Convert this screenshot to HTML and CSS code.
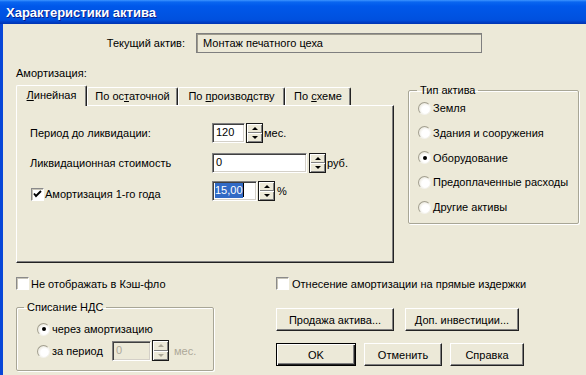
FILE: index.html
```html
<!DOCTYPE html>
<html lang="ru">
<head>
  <meta charset="UTF-8" />
  <title>Характеристики актива</title>
<link rel="stylesheet" href="styles.css">
</head>
<body>
  <div class="window">
    <div class="titlebar">Характеристики актива</div>
    <div class="client">
      <div class="current">
        <span class="current-label">Текущий актив:</span>
        <div class="static-field">Монтаж печатного цеха</div>
      </div>

      <div class="section-label">Амортизация:</div>

      <div class="main">
        <div class="tabs">
          <div class="tabstrip">
            <div class="tab tab-active tab-1"><u>Л</u>инейная</div>
            <div class="tab tab-2">По ос<u>т</u>аточной</div>
            <div class="tab tab-3">По <u>п</u>роизводству</div>
            <div class="tab tab-4">По <u>с</u>хеме</div>
          </div>
          <div class="tab-pane">
            <div class="field-row row-period">
              <span class="field-label">Период до ликвидации:</span>
              <div class="edit edit-period">120</div>
              <div class="spin"><span class="spin-half"><i class="arrow-up"></i></span><span class="spin-half"><i class="arrow-down"></i></span></div>
              <span class="unit">мес.</span>
            </div>
            <div class="field-row row-value">
              <span class="field-label">Ликвидационная стоимость</span>
              <div class="edit edit-value">0</div>
              <div class="spin"><span class="spin-half"><i class="arrow-up"></i></span><span class="spin-half"><i class="arrow-down"></i></span></div>
              <span class="unit">руб.</span>
            </div>
            <div class="field-row row-first">
              <span class="field-label check-label">
                <span class="checkbox"><svg width="11" height="11" viewBox="0 0 11 11"><path d="M2 4.5 L4 7 L9 2" fill="none" stroke="#000" stroke-width="1.9"/></svg></span>
                Амортизация 1-го года
              </span>
              <div class="edit edit-first"><span class="selection">15,00</span><span class="caret"></span></div>
              <div class="spin"><span class="spin-half"><i class="arrow-up"></i></span><span class="spin-half"><i class="arrow-down"></i></span></div>
              <span class="unit">%</span>
            </div>
          </div>
        </div>

        <fieldset class="group type-group">
          <legend>Тип актива</legend>
          <div class="radio-row"><span class="radio"></span>Земля</div>
          <div class="radio-row"><span class="radio"></span>Здания и сооружения</div>
          <div class="radio-row"><span class="radio radio-on"></span>Оборудование</div>
          <div class="radio-row"><span class="radio"></span>Предоплаченные расходы</div>
          <div class="radio-row"><span class="radio"></span>Другие активы</div>
        </fieldset>
      </div>

      <div class="checks">
        <label class="check-item check-cash"><span class="checkbox"></span>Не отображать в Кэш-фло</label>
        <label class="check-item"><span class="checkbox"></span>Отнесение амортизации на прямые издержки</label>
      </div>

      <div class="bottom">
        <fieldset class="group vat-group">
          <legend>Списание НДС</legend>
          <div class="radio-row"><span class="radio radio-on"></span>через амортизацию</div>
          <div class="radio-row">
            <span class="radio-label"><span class="radio"></span>за период</span>
            <div class="edit edit-disabled">0</div>
            <div class="spin spin-disabled"><span class="spin-half"><i class="arrow-up"></i></span><span class="spin-half"><i class="arrow-down"></i></span></div>
            <span class="unit unit-disabled">мес.</span>
          </div>
        </fieldset>

        <div class="buttons">
          <div class="btn-row">
            <button class="btn btn-sale">Продажа актива...</button>
            <button class="btn btn-invest">Доп. инвестиции...</button>
          </div>
          <div class="btn-row btn-row-main">
            <button class="btn btn-default btn-ok">OK</button>
            <button class="btn btn-cancel">Отменить</button>
            <button class="btn btn-help">Справка</button>
          </div>
        </div>
      </div>
    </div>
  </div>
</body>
</html>
```

FILE: styles.css
```css
body {
  margin: 0;
  font-family: "Liberation Sans", Arial, sans-serif;
  font-size: 11px;
  color: #000;
  background: #ece9d8;
}

.window {
  width: 586px;
  height: 375px;
  overflow: hidden;
  background: #ece9d8;
}

.titlebar {
  height: 24px;
  box-sizing: border-box;
  padding: 1px 0 0 6px;
  line-height: 23px;
  font-size: 13px;
  font-weight: bold;
  color: #fff;
  text-shadow: 1px 1px #0a1e8a;
  background: linear-gradient(to bottom, #3d95ff 0, #0a66f0 2px, #0058ea 6px, #0054e3 14px, #0050de 20px, #003fc8 22px, #0033b0 24px);
}

.client {
  height: 351px;
  box-sizing: border-box;
  border-left: 3px solid #0847d8;
  padding-left: 13px;
}

/* current asset */
.current {
  display: flex;
  align-items: center;
  height: 20px;
  padding-top: 9px;
}

.current-label {
  width: 180px;
  box-sizing: border-box;
  padding-right: 11px;
  text-align: right;
}

.static-field {
  width: 286px;
  height: 20px;
  box-sizing: border-box;
  border: 1px solid #7f7f7f;
  box-shadow: inset 1px 1px #9d9a8c;
  padding-left: 6px;
  line-height: 18px;
}

.section-label {
  margin-top: 13px;
  line-height: 14px;
}

.main {
  display: flex;
  align-items: flex-start;
  margin-top: 5px;
}

/* tabs */
.tabs {
  width: 378px;
}

.tabstrip {
  display: flex;
  align-items: flex-end;
  height: 20px;
}

.tab {
  height: 18px;
  box-sizing: border-box;
  border-top: 1px solid #fff;
  border-left: 1px solid #fff;
  border-right: 1px solid #222;
  box-shadow: inset -1px 0 #808080;
  border-radius: 2px 2px 0 0;
  background: #ece9d8;
  text-align: center;
  line-height: 17px;
}

.tab-active {
  position: relative;
  z-index: 1;
  height: 21px;
  margin-bottom: -1px;
  line-height: 19px;
}

.tab-1 { width: 71px; }
.tab-2 { width: 91px; }
.tab-3 { width: 107px; }
.tab-4 { width: 66px; }

.tab-pane {
  height: 158px;
  box-sizing: border-box;
  border-top: 1px solid #fff;
  border-left: 1px solid #fff;
  border-right: 1px solid #222;
  border-bottom: 1px solid #222;
  box-shadow: inset -1px -1px #808080;
  padding: 17px 0 0 13px;
}

.field-row {
  display: flex;
  align-items: center;
  height: 20px;
}

.row-value { margin-top: 10px; }
.row-first { margin-top: 8px; }

.field-label {
  width: 182px;
}

.check-label {
  display: flex;
  align-items: center;
  margin-top: 6px;
}

.check-label .checkbox {
  margin-left: 1px;
  margin-right: 1px;
}

/* edit boxes */
.edit {
  height: 20px;
  box-sizing: border-box;
  border: 1px solid;
  border-color: #808080 #fff #fff #808080;
  box-shadow: inset 1px 1px #404040, inset -1px -1px #d4d0c8;
  background: #fff;
  padding-left: 3px;
  line-height: 17px;
  white-space: nowrap;
}

.edit-period { width: 33px; }
.edit-value { width: 95px; }
.edit-first { width: 45px; padding-left: 2px; }

.edit-disabled {
  width: 39px;
  background: #ece9d8;
  color: #aca899;
}

.selection {
  background: #316ac5;
  color: #fff;
  padding: 1px 0 2px;
}

.caret {
  display: inline-block;
  width: 1px;
  height: 14px;
  background: #000;
  vertical-align: -3px;
}

/* spin buttons */
.spin {
  display: flex;
  flex-direction: column;
  width: 17px;
  height: 20px;
  box-sizing: border-box;
  border: 1px solid #1a1a1a;
  margin-left: 1px;
}

.row-value .spin { margin-left: 2px; }
.row-first .spin { margin-left: 1px; }

.spin-half {
  flex: 1;
  display: flex;
  align-items: center;
  justify-content: center;
  background: #ece9d8;
  box-shadow: inset 1px 1px #fff, inset -1px -1px #808080;
}

.arrow-up {
  width: 0;
  height: 0;
  border-left: 3px solid transparent;
  border-right: 3px solid transparent;
  border-bottom: 3px solid #000;
}

.arrow-down {
  width: 0;
  height: 0;
  border-left: 3px solid transparent;
  border-right: 3px solid transparent;
  border-top: 3px solid #000;
}

.spin-disabled {
  height: 21px;
  margin-top: -1px;
}

.spin-disabled .arrow-up { border-bottom-color: #aca899; }
.spin-disabled .arrow-down { border-top-color: #aca899; }

.unit {
  margin-left: 1px;
}

.row-first .unit { margin-left: 2px; }

.unit-disabled {
  margin-left: 5px;
  color: #aca899;
}

/* group boxes */
.group {
  margin: 0;
  box-sizing: border-box;
  border: 1px solid #a8a696;
  box-shadow: inset 1px 1px #fff, 1px 1px #fff;
  border-radius: 2px;
}

.group legend {
  padding: 0 3px;
}

.type-group {
  width: 171px;
  margin: -3px 0 0 14px;
  padding: 0 0 6px 8px;
}

.type-group legend {
  line-height: 16px;
}

.radio-row {
  display: flex;
  align-items: center;
  height: 20px;
}

.type-group .radio-row + .radio-row {
  margin-top: 4.75px;
}

.radio {
  width: 13px;
  height: 13px;
  box-sizing: border-box;
  border-radius: 50%;
  border: 1px solid;
  border-color: #a29f8f #f4f3ee #f4f3ee #a29f8f;
  background: radial-gradient(circle at 60% 60%, #fff 40%, #dcd8c6 100%);
  display: flex;
  align-items: center;
  justify-content: center;
  margin: 0 2px 0 1px;
  flex: none;
}

.radio-on::after {
  content: "";
  width: 4px;
  height: 4px;
  border-radius: 50%;
  background: #000;
}

/* checkboxes */
.checks {
  display: flex;
  align-items: center;
  height: 13px;
  margin-top: 14px;
}

.check-item {
  display: flex;
  align-items: center;
}

.check-cash {
  width: 260px;
}

.checkbox {
  width: 13px;
  height: 13px;
  box-sizing: border-box;
  border: 1px solid;
  border-color: #8a8a8a #fff #fff #8a8a8a;
  box-shadow: inset 1px 1px #c8c5b8;
  background: #fff;
  margin-right: 2px;
  display: flex;
  align-items: center;
  justify-content: center;
  flex: none;
}

.checks .check-item + .check-item .checkbox {
  margin-right: 3px;
}

/* bottom area */
.bottom {
  display: flex;
  align-items: flex-start;
  margin-top: 10px;
}

.vat-group {
  width: 198px;
  padding: 0 0 8px 7px;
}

.vat-group legend {
  line-height: 14px;
}

.vat-group .radio-row {
  height: 22px;
  margin-left: 12px;
}

.vat-group .radio-row:first-of-type {
  margin-top: 4px;
}

.radio-label {
  display: flex;
  align-items: center;
  width: 76px;
}

.buttons {
  margin: 8px 0 0 62px;
}

.btn-row {
  display: flex;
  gap: 11px;
}

.btn-row-main {
  gap: 8px;
  margin-top: 12px;
}

.btn {
  height: 23px;
  box-sizing: border-box;
  border: 1px solid;
  border-color: #fff #222 #222 #fff;
  box-shadow: inset -1px -1px #808080;
  background: #ece9d8;
  font: inherit;
  color: #000;
  padding: 0;
  text-align: center;
}

.btn-default {
  border-color: #000;
  box-shadow: inset 1px 1px #fff, inset -1px -1px #222, inset -2px -2px #808080;
}

.btn-sale { width: 118px; }
.btn-invest { width: 114px; }
.btn-ok { width: 80px; }
.btn-cancel { width: 78px; }
.btn-help { width: 74px; }
```
